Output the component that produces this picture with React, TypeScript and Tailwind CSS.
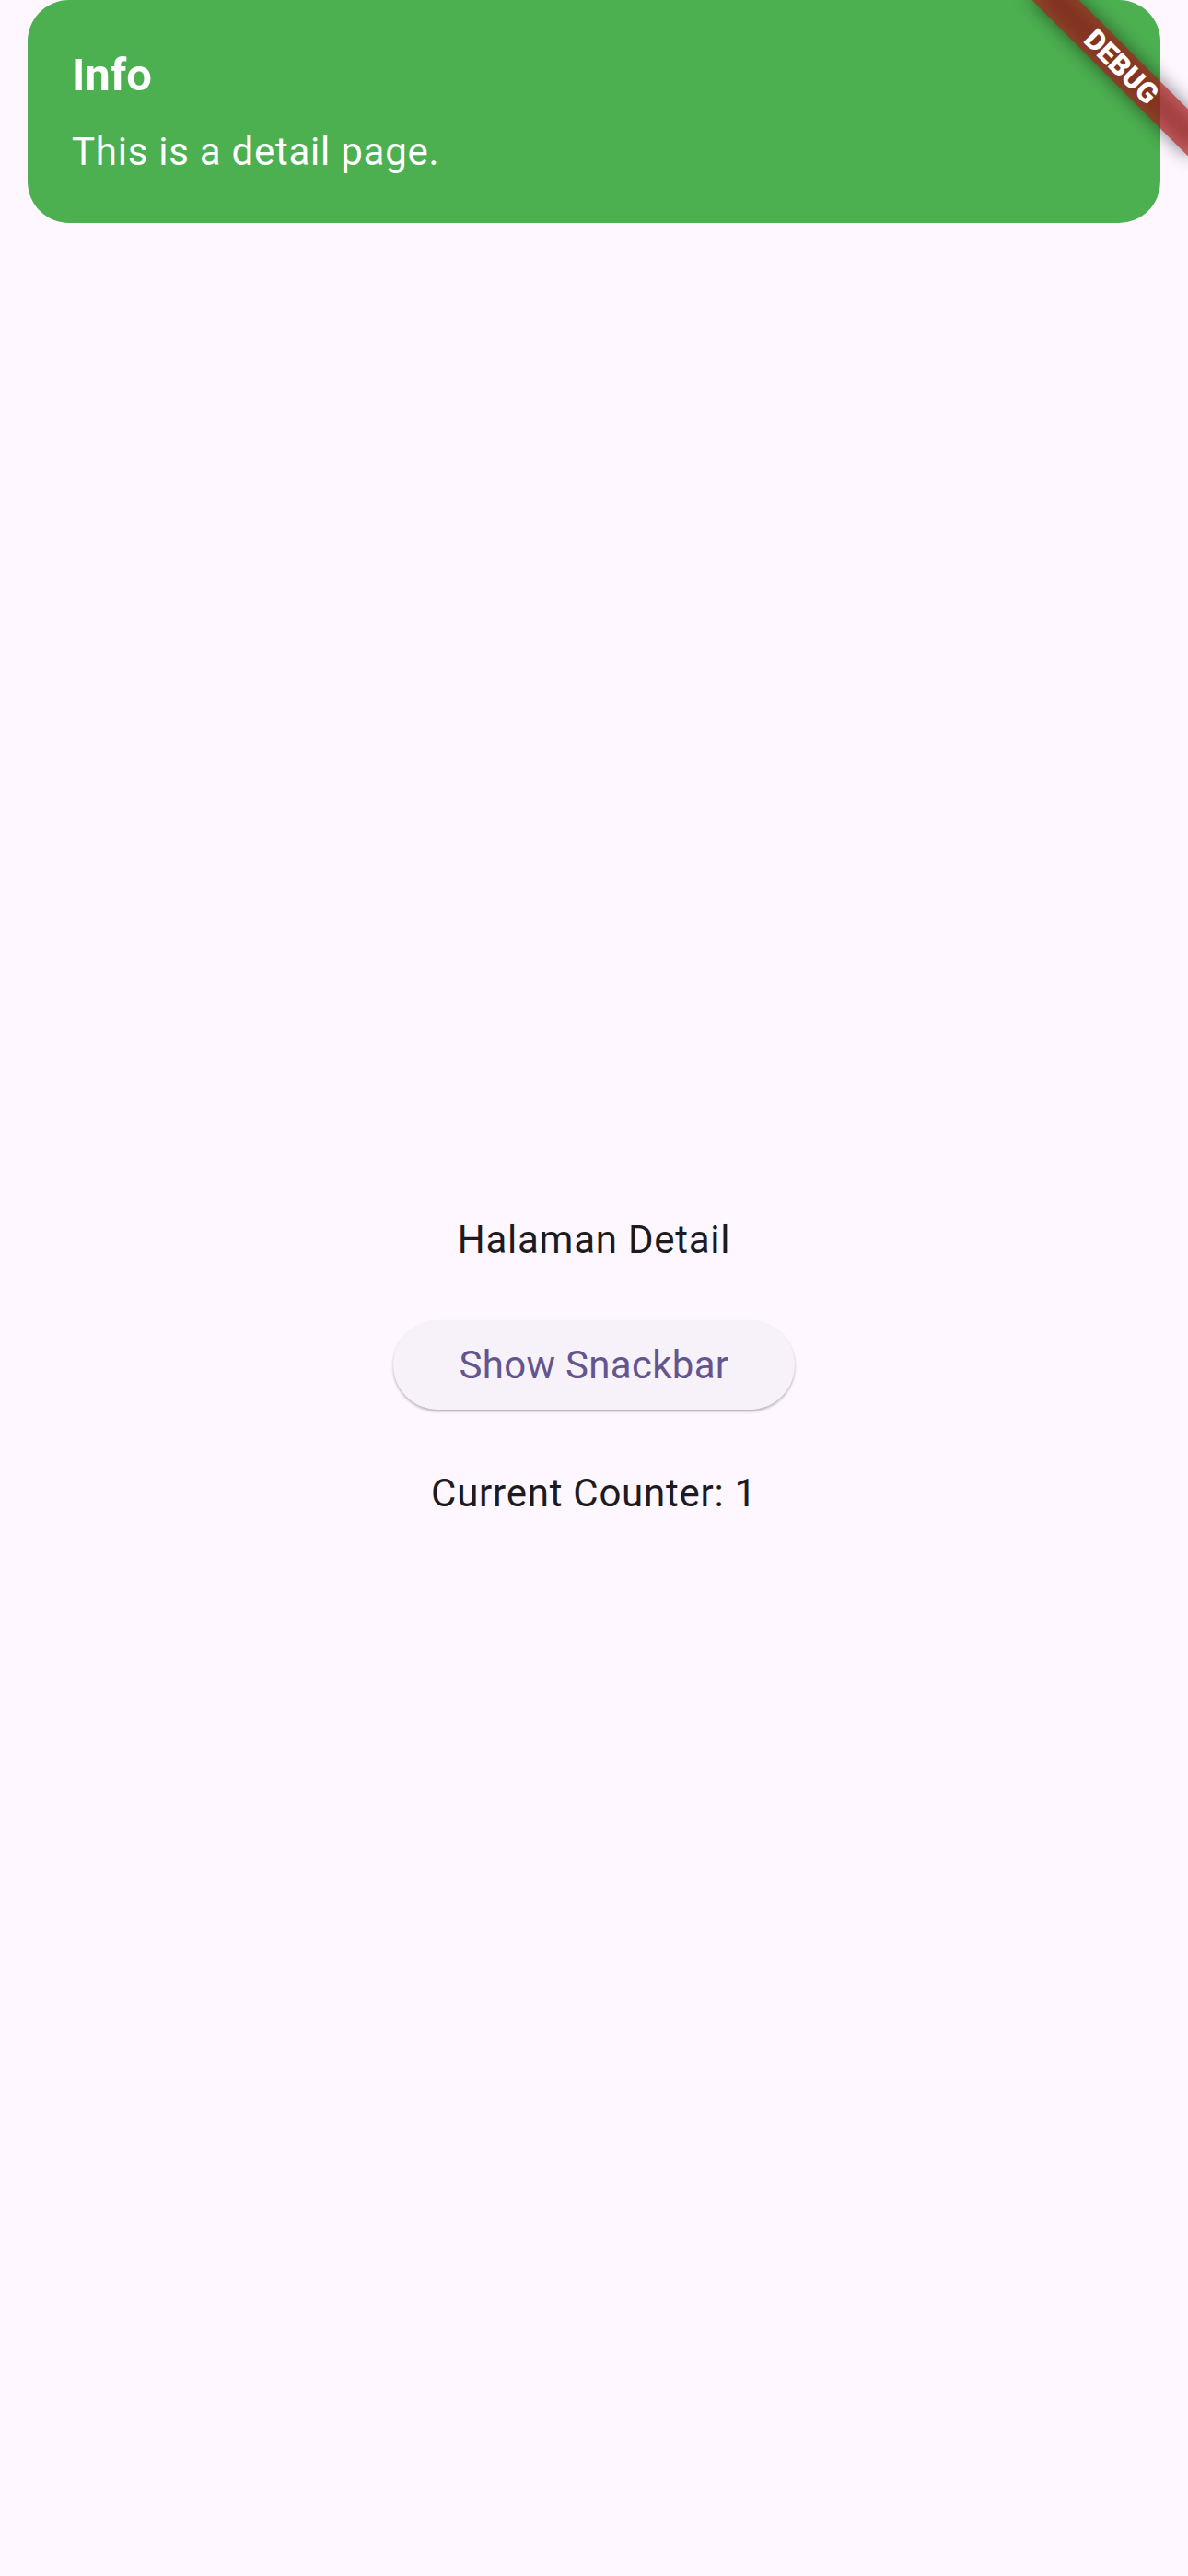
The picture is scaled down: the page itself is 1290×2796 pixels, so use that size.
import React, { useState } from "react";

export default function App() {
  const [counter] = useState(1);

  return (
    <div
      className="relative w-[1290px] min-h-[2796px] overflow-hidden bg-[#FEF7FF]"
      style={{ fontFamily: "Roboto, 'Noto Sans', sans-serif" }}
    >
      {/* top snackbar */}
      <div className="mx-[30px] h-[242px] rounded-[45px] bg-[#4CAF50] pl-[48px] pt-[57px] text-white">
        <div className="text-[49px] font-bold leading-none">Info</div>
        <div className="mt-[38px] text-[42px] leading-none tracking-[0.75px]">This is a detail page.</div>
      </div>

      <div className="mt-[1083px] flex flex-col items-center text-[#1D1B20]">
        <div className="text-[42px] leading-none tracking-[0.75px]">Halaman Detail</div>
        <button className="mt-[66px] flex h-[97px] w-[436px] items-center justify-center rounded-full bg-[#F7F2FA] text-[42px] leading-none tracking-[0.3px] text-[#65558F] shadow-[0_2px_3px_rgba(0,0,0,0.28)]">
          Show Snackbar
        </button>
        <div className="mt-[70px] text-[42px] leading-none tracking-[0.75px]">Current Counter: {counter}</div>
      </div>

      {/* debug banner */}
      <div className="absolute left-[1098px] top-[54px] h-[36px] w-[240px] rotate-45">
        <div className="absolute inset-0 bg-black/50 blur-[10px]" />
        <div className="relative flex h-full w-full items-center justify-center bg-[rgba(183,28,28,0.63)]">
          <span className="text-[31px] font-black leading-none text-white">DEBUG</span>
        </div>
      </div>
    </div>
  );
}
